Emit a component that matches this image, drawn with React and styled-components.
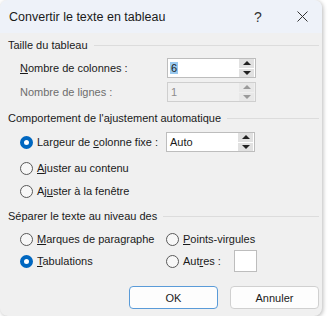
import React from 'react';
import styled, { createGlobalStyle } from 'styled-components';

const GlobalStyle = createGlobalStyle`
  html, body {
    margin: 0;
    padding: 0;
    background: #ffffff;
  }
  body {
    font-family: "Liberation Sans", Arial, sans-serif;
    font-size: 11px;
    color: #1a1a1a;
  }
`;

const Window = styled.div`
  width: 322px;
  height: 316px;
  background: #f0f0f0;
  border-radius: 8px;
  box-shadow: 1px 1px 4px rgba(0, 0, 0, 0.28);
  overflow: hidden;
  display: flex;
  flex-direction: column;
`;

const TitleBar = styled.div`
  height: 33px;
  background: #eef2f9;
  display: flex;
  align-items: center;
  padding-left: 9px;
`;

const Title = styled.div`
  flex: 1;
  font-size: 12.5px;
  color: #1a1a1a;
`;

const TitleButton = styled.div`
  width: ${p => p.w}px;
  margin-right: ${p => p.mr || 0}px;
  display: flex;
  justify-content: center;
  align-items: center;
  font-size: 14px;
  color: #333;
`;

const Body = styled.div`
  padding: 0 3px 0 8px;
  display: flex;
  flex-direction: column;
`;

const GroupTitle = styled.div`
  height: 16px;
  margin-top: ${p => p.mt}px;
  display: flex;
  align-items: center;
  gap: 6px;
  white-space: nowrap;

  &::after {
    content: '';
    flex: 1;
    border-top: 1px solid #dcdcdc;
  }
`;

const Row = styled.div`
  height: ${p => p.h || 20}px;
  margin-top: ${p => p.mt}px;
  display: flex;
  align-items: center;
  padding-left: 12px;
`;

const Label = styled.div`
  width: 147px;
  white-space: nowrap;
  color: ${p => (p.disabled ? '#6d6d6d' : '#1a1a1a')};
`;

const SpinBox = styled.div`
  width: 89px;
  height: 20px;
  box-sizing: border-box;
  border: 1px solid ${p => (p.disabled ? '#cfcfcf' : '#bdbdbd')};
  background: ${p => (p.disabled ? '#f0f0f0' : '#ffffff')};
  display: flex;
  align-items: center;
`;

const SpinValue = styled.div`
  flex: 1;
  padding-left: 2px;
  color: ${p => (p.disabled ? '#8d8d8d' : '#1a1a1a')};

  span {
    background: ${p => (p.selected ? '#99c9ef' : 'transparent')};
    padding: 0 1px;
  }
`;

const SpinButtons = styled.div`
  width: 15px;
  height: 18px;
  margin-right: 1px;
  display: flex;
  flex-direction: column;
  gap: 1px;
`;

const SpinButton = styled.div`
  flex: 1;
  background: ${p => (p.disabled ? '#e8e8e8' : '#e1e1e1')};
  display: flex;
  align-items: center;
  justify-content: center;
`;

const Arrow = styled.div`
  width: 0;
  height: 0;
  border-left: 4px solid transparent;
  border-right: 4px solid transparent;
  ${p => (p.down ? 'border-top' : 'border-bottom')}: 4px solid ${p => (p.disabled ? '#9a9a9a' : '#222')};
`;

const RadioWrap = styled.div`
  display: flex;
  align-items: center;
  gap: 4px;
  white-space: nowrap;
  width: ${p => (p.w ? `${p.w}px` : 'auto')};
`;

const RadioCircle = styled.div`
  width: 13px;
  height: 13px;
  flex-shrink: 0;
  box-sizing: border-box;
  border-radius: 50%;
  border: ${p => (p.checked ? '4px solid #0067c0' : '1px solid #595959')};
  background: ${p => (p.checked ? '#ffffff' : '#f7f7f7')};
`;

const RadioLabel = styled.div`
  u {
    text-decoration: underline;
    text-underline-offset: 1px;
  }
`;

const SmallBox = styled.div`
  width: 23px;
  height: 22px;
  box-sizing: border-box;
  border: 1px solid #bdbdbd;
  background: #ffffff;
  margin-left: 13px;
`;

const ButtonRow = styled.div`
  margin-top: 15px;
  display: flex;
  justify-content: flex-end;
  gap: 12px;
`;

const Button = styled.div`
  width: 89px;
  height: 23px;
  box-sizing: border-box;
  border-radius: 4px;
  background: #fdfdfd;
  border: 1px solid ${p => (p.primary ? '#5a9bd8' : '#d0d0d0')};
  display: flex;
  align-items: center;
  justify-content: center;
  color: #1a1a1a;
`;

const Spin = ({ value, disabled, selected }) => (
  <SpinBox disabled={disabled}>
    <SpinValue disabled={disabled} selected={selected}>
      <span>{value}</span>
    </SpinValue>
    <SpinButtons>
      <SpinButton disabled={disabled}><Arrow disabled={disabled} /></SpinButton>
      <SpinButton disabled={disabled}><Arrow down disabled={disabled} /></SpinButton>
    </SpinButtons>
  </SpinBox>
);

const Radio = ({ checked, children, w }) => (
  <RadioWrap w={w}>
    <RadioCircle checked={checked} />
    <RadioLabel>{children}</RadioLabel>
  </RadioWrap>
);

export default function App() {
  return (
    <>
      <GlobalStyle />
      <Window>
        <TitleBar>
          <Title>Convertir le texte en tableau</Title>
          <TitleButton w={20} mr={14}>?</TitleButton>
          <TitleButton w={40}>
            <svg width="11" height="11" viewBox="0 0 11 11">
              <path d="M0.5 0.5 L10.5 10.5 M10.5 0.5 L0.5 10.5" stroke="#333" strokeWidth="1" />
            </svg>
          </TitleButton>
        </TitleBar>
        <Body>
          <GroupTitle mt={4}>Taille du tableau</GroupTitle>
          <Row mt={5}>
            <Label><u>N</u>ombre de colonnes :</Label>
            <Spin value="6" selected />
          </Row>
          <Row mt={4}>
            <Label disabled>Nombre de lignes :</Label>
            <Spin value="1" disabled />
          </Row>

          <GroupTitle mt={8}>Comportement de l'ajustement automatique</GroupTitle>
          <Row mt={6}>
            <Radio checked w={146}>Largeur de <u>c</u>olonne fixe :</Radio>
            <Spin value="Auto" />
          </Row>
          <Row mt={6}>
            <Radio><u>A</u>juster au contenu</Radio>
          </Row>
          <Row mt={3}>
            <Radio>Aj<u>u</u>ster à la fenêtre</Radio>
          </Row>

          <GroupTitle mt={7}>Séparer le texte au niveau des</GroupTitle>
          <Row mt={5}>
            <Radio w={146}><u>M</u>arques de paragraphe</Radio>
            <Radio><u>P</u>oints-virgules</Radio>
          </Row>
          <Row mt={2}>
            <Radio checked w={146}><u>T</u>abulations</Radio>
            <Radio>Aut<u>r</u>es :</Radio>
            <SmallBox />
          </Row>

          <ButtonRow>
            <Button primary>OK</Button>
            <Button>Annuler</Button>
          </ButtonRow>
        </Body>
      </Window>
    </>
  );
}
